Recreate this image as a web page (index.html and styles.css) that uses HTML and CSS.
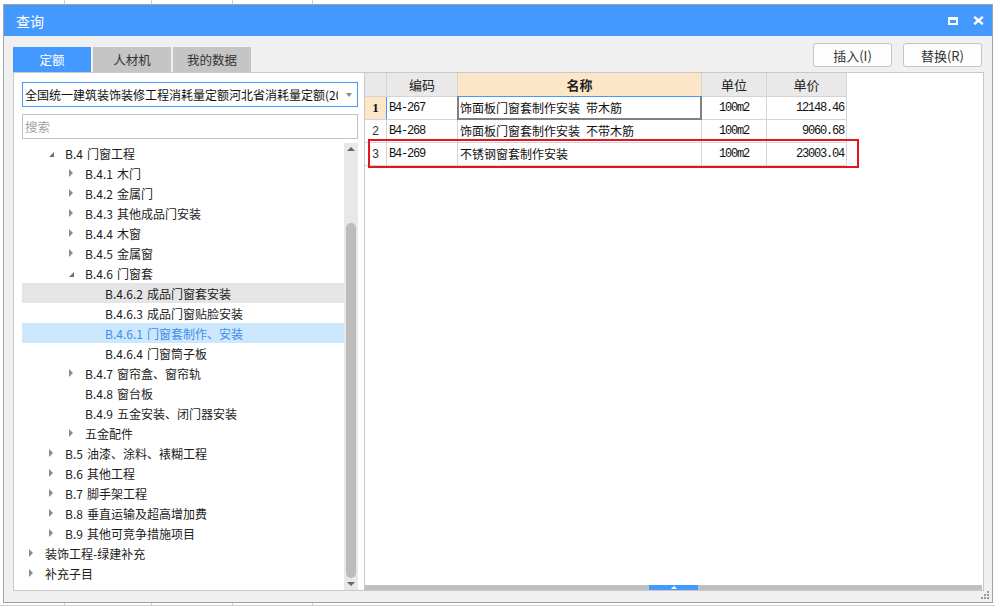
FILE: index.html
```html
<!DOCTYPE html>
<html lang="zh-CN">
<head>
<meta charset="utf-8">
<title>查询</title>
<link rel="stylesheet" href="styles.css">
</head>
<body>
<div class="dialog">
  <div class="titlebar">
    <span class="title">查询</span>
    <div class="winctl">
      <span class="max"></span>
      <svg class="close" width="11" height="9" viewBox="0 0 11 9"><path d="M1.2 0.8 L9.8 8.2 M9.8 0.8 L1.2 8.2" stroke="#fff" stroke-width="2.3" fill="none"/></svg>
    </div>
  </div>
  <div class="toolbar">
    <div class="tabs">
      <div class="tab active">定额</div>
      <div class="tab">人材机</div>
      <div class="tab">我的数据</div>
    </div>
    <div class="actions">
      <button class="btn">插入(I)</button>
      <button class="btn">替换(R)</button>
    </div>
  </div>
  <div class="main">
    <div class="left">
      <div class="select">
        <span class="select-text">全国统一建筑装饰装修工程消耗量定额河北省消耗量定额(20</span>
        <span class="caret"></span>
      </div>
      <div class="search">搜索</div>
      <div class="treewrap">
        <ul class="tree">
          <li class="row l1"><span class="tg"><i class="ad"></i></span><span class="code">B.4</span>门窗工程</li>
          <li class="row l2"><span class="tg"><i class="ar"></i></span><span class="code">B.4.1</span>木门</li>
          <li class="row l2"><span class="tg"><i class="ar"></i></span><span class="code">B.4.2</span>金属门</li>
          <li class="row l2"><span class="tg"><i class="ar"></i></span><span class="code">B.4.3</span>其他成品门安装</li>
          <li class="row l2"><span class="tg"><i class="ar"></i></span><span class="code">B.4.4</span>木窗</li>
          <li class="row l2"><span class="tg"><i class="ar"></i></span><span class="code">B.4.5</span>金属窗</li>
          <li class="row l2"><span class="tg"><i class="ad"></i></span><span class="code">B.4.6</span>门窗套</li>
          <li class="row l3 hover"><span class="tg"></span><span class="code">B.4.6.2</span>成品门窗套安装</li>
          <li class="row l3"><span class="tg"></span><span class="code">B.4.6.3</span>成品门窗贴脸安装</li>
          <li class="row l3 selected"><span class="tg"></span><span class="code">B.4.6.1</span>门窗套制作、安装</li>
          <li class="row l3"><span class="tg"></span><span class="code">B.4.6.4</span>门窗筒子板</li>
          <li class="row l2"><span class="tg"><i class="ar"></i></span><span class="code">B.4.7</span>窗帘盒、窗帘轨</li>
          <li class="row l2"><span class="tg"></span><span class="code">B.4.8</span>窗台板</li>
          <li class="row l2"><span class="tg"></span><span class="code">B.4.9</span>五金安装、闭门器安装</li>
          <li class="row l2"><span class="tg"><i class="ar"></i></span>五金配件</li>
          <li class="row l1"><span class="tg"><i class="ar"></i></span><span class="code">B.5</span>油漆、涂料、裱糊工程</li>
          <li class="row l1"><span class="tg"><i class="ar"></i></span><span class="code">B.6</span>其他工程</li>
          <li class="row l1"><span class="tg"><i class="ar"></i></span><span class="code">B.7</span>脚手架工程</li>
          <li class="row l1"><span class="tg"><i class="ar"></i></span><span class="code">B.8</span>垂直运输及超高增加费</li>
          <li class="row l1"><span class="tg"><i class="ar"></i></span><span class="code">B.9</span>其他可竞争措施项目</li>
          <li class="row l0"><span class="tg"><i class="ar"></i></span>装饰工程-绿建补充</li>
          <li class="row l0"><span class="tg"><i class="ar"></i></span>补充子目</li>
        </ul>
        <div class="vscroll">
          <span class="sb-up"></span>
          <span class="sb-thumb"></span>
          <span class="sb-down"></span>
        </div>
      </div>
    </div>
    <div class="right">
      <div class="gridarea">
        <div class="grid">
          <div class="c h"></div>
          <div class="c h">编码</div>
          <div class="c h hname">名称</div>
          <div class="c h">单位</div>
          <div class="c h">单价</div>

          <div class="c rn rn-cur">1</div>
          <div class="c mono">B4-267</div>
          <div class="c name cur">饰面板门窗套制作安装&#8194;带木筋</div>
          <div class="c mono unit">100m2</div>
          <div class="c mono price">12148.46</div>

          <div class="c rn">2</div>
          <div class="c mono">B4-268</div>
          <div class="c name">饰面板门窗套制作安装&#8194;不带木筋</div>
          <div class="c mono unit">100m2</div>
          <div class="c mono price">9060.68</div>

          <div class="c rn">3</div>
          <div class="c mono">B4-269</div>
          <div class="c name">不锈钢窗套制作安装</div>
          <div class="c mono unit">100m2</div>
          <div class="c mono price">23003.04</div>
        </div>
        <div class="redbox"></div>
      </div>
      <div class="hsplit"><span class="handle"><i class="handle-arrow"></i></span></div>
    </div>
  </div>
  <div class="footer">
    <svg class="grip" width="9" height="9" viewBox="0 0 9 9">
      <rect x="6" y="0" width="2" height="2" fill="#9a9a9a"/>
      <rect x="3" y="3" width="2" height="2" fill="#9a9a9a"/>
      <rect x="6" y="3" width="2" height="2" fill="#9a9a9a"/>
      <rect x="0" y="6" width="2" height="2" fill="#9a9a9a"/>
      <rect x="3" y="6" width="2" height="2" fill="#9a9a9a"/>
      <rect x="6" y="6" width="2" height="2" fill="#9a9a9a"/>
    </svg>
  </div>
</div>
</body>
</html>
```

FILE: styles.css
```css
html, body {
  margin: 0;
  padding: 0;
}
body {
  width: 995px;
  height: 606px;
  overflow: hidden;
  font-family: "Noto Sans CJK SC", "Microsoft YaHei", sans-serif;
  background-color: #fff;
  background-image:
    linear-gradient(#cfcfcf, #cfcfcf),
    linear-gradient(#cfcfcf, #cfcfcf),
    linear-gradient(#cfcfcf, #cfcfcf),
    linear-gradient(#cfcfcf, #cfcfcf),
    linear-gradient(#cfcfcf, #cfcfcf);
  background-size: 1px 100%, 1px 100%, 1px 100%, 1px 100%, 100% 1px;
  background-position: 64px 0, 151px 0, 232px 0, 312px 0, 0 605px;
  background-repeat: no-repeat;
}

.dialog {
  margin: 4px 2px 0 3px;
  height: 599px;
  box-sizing: border-box;
  border: 1px solid #a3a3a3;
  background: #f0f0f0;
  display: flex;
  flex-direction: column;
}

/* title bar */
.titlebar {
  flex: none;
  height: 31px;
  background: #4499fe;
  color: #fff;
  display: flex;
  align-items: center;
  padding: 0 8px 0 12px;
  font-size: 14px;
}
.title {
  flex: 1;
}
.winctl {
  display: flex;
  align-items: center;
  gap: 15px;
}
.max {
  display: block;
  width: 10px;
  height: 8px;
  box-sizing: border-box;
  border: 2px solid #fff;
  border-top-width: 3px;
}
.close {
  display: block;
}

/* toolbar */
.toolbar {
  flex: none;
  height: 36px;
  display: flex;
  justify-content: space-between;
  padding: 0 10px 0 9px;
}
.tabs {
  display: flex;
  gap: 2px;
  align-self: flex-end;
}
.tab {
  width: 78px;
  height: 25px;
  line-height: 25px;
  text-align: center;
  font-size: 12.5px;
  color: #333;
  background: #c5c5c5;
}
.tab.active {
  background: #4499fe;
  color: #fff;
}
.actions {
  display: flex;
  gap: 11px;
  padding-top: 7px;
}
.btn {
  width: 79px;
  height: 24px;
  box-sizing: border-box;
  border: 1px solid #c5c5c5;
  border-radius: 3px;
  background: #fdfdfd;
  font-family: "Noto Sans CJK SC", sans-serif;
  font-size: 13px;
  color: #333;
  padding: 0;
  line-height: 21px;
}

/* main */
.main {
  flex: none;
  height: 519px;
  margin: 0 8px 0 9px;
  box-sizing: border-box;
  border: 1px solid #c9c9c9;
  background: #fff;
  display: flex;
}
.left {
  width: 351px;
  flex: none;
  box-sizing: border-box;
  border-right: 1px solid #c9c9c9;
  padding: 9px 6px 0 8px;
  display: flex;
  flex-direction: column;
}
.select {
  flex: none;
  height: 25px;
  box-sizing: border-box;
  border: 1px solid #4499fe;
  display: flex;
  align-items: center;
}
.select-text {
  width: 313px;
  padding-left: 2px;
  overflow: hidden;
  white-space: nowrap;
  font-size: 12px;
  color: #111;
}
.caret {
  margin-left: 8px;
  width: 0;
  height: 0;
  border-top: 4px solid #8a8a8a;
  border-left: 3.5px solid transparent;
  border-right: 3.5px solid transparent;
}
.search {
  flex: none;
  margin-top: 7px;
  height: 25px;
  box-sizing: border-box;
  border: 1px solid #c3c3c3;
  padding-left: 2px;
  line-height: 23px;
  font-size: 12.5px;
  color: #a3a3a3;
}
.treewrap {
  margin-top: 4px;
  flex: 1;
  min-height: 0;
  display: flex;
}
.tree {
  flex: 1;
  list-style: none;
  margin: 0;
  padding: 0;
}
.row {
  height: 20px;
  display: flex;
  align-items: center;
  font-size: 12px;
  color: #1c1c1c;
  white-space: nowrap;
}
.row.l0 { padding-left: 0; }
.row.l1 { padding-left: 20px; }
.row.l2 { padding-left: 40px; }
.row.l3 { padding-left: 60px; }
.row.hover {
  background: #e5e5e5;
}
.row.selected {
  background: #cce8ff;
  color: #3f8ee8;
}
.code {
  margin-right: 4px;
}
.tg {
  flex: none;
  width: 23px;
  height: 20px;
  box-sizing: border-box;
  padding-left: 7px;
  display: flex;
  align-items: center;
}
.ar {
  display: block;
  width: 0;
  height: 0;
  border-left: 4px solid #8a8a8a;
  border-top: 4px solid transparent;
  border-bottom: 4px solid transparent;
}
.ad {
  display: block;
  width: 0;
  height: 0;
  margin-top: 2px;
  border-bottom: 5px solid #707070;
  border-left: 5px solid transparent;
}

.vscroll {
  flex: none;
  width: 14px;
  background: #e8e8e8;
  display: flex;
  flex-direction: column;
  align-items: center;
}
.sb-up {
  margin-top: 4px;
  width: 0;
  height: 0;
  border-bottom: 4px solid #666;
  border-left: 4px solid transparent;
  border-right: 4px solid transparent;
}
.sb-thumb {
  margin-top: 72px;
  width: 10px;
  height: 355px;
  border-radius: 5px;
  background: #bcbcbc;
}
.sb-down {
  margin-top: 4px;
  width: 0;
  height: 0;
  border-top: 4px solid #666;
  border-left: 4px solid transparent;
  border-right: 4px solid transparent;
}

/* right panel */
.right {
  flex: 1;
  display: flex;
  flex-direction: column;
}
.gridarea {
  flex: 1;
  position: relative;
}
.grid {
  display: grid;
  grid-template-columns: 22px 71px 244px 65px 80px;
  grid-template-rows: 24px 23px 23px 23px;
  width: 482px;
}
.c {
  box-sizing: border-box;
  border-right: 1px solid #d4d4d4;
  border-bottom: 1px solid #d4d4d4;
  font-size: 12px;
  color: #111;
  line-height: 22px;
  padding-left: 2px;
  white-space: nowrap;
  overflow: visible;
}
.h {
  background: #e9e9e9;
  text-align: center;
  font-size: 13px;
  line-height: 23px;
  padding-left: 0;
  color: #222;
}
.h.hname {
  background: #fde5c8;
  font-weight: bold;
}
.rn {
  text-align: center;
  padding-left: 0;
  font-family: "Liberation Sans", sans-serif;
  font-size: 12px;
  color: #333;
}
.rn-cur {
  background: #fde5c8;
  font-family: "Liberation Serif", serif;
  font-weight: bold;
  font-size: 13px;
  color: #111;
  border-right-color: #4499fe;
}
.mono {
  font-family: "Liberation Mono", monospace;
  font-size: 12px;
  letter-spacing: -1.2px;
}
.unit {
  text-align: center;
  padding-left: 0;
}
.price {
  text-align: right;
  padding-right: 2px;
}
.name {
  padding-left: 2px;
}
.cur {
  position: relative;
}
.cur::after {
  content: "";
  position: absolute;
  left: -1px;
  top: -1px;
  right: -1px;
  bottom: -1px;
  border: 2px solid #808080;
  border-top: 1px solid #4499fe;
}
.redbox {
  position: absolute;
  left: 3px;
  top: 66px;
  width: 491px;
  height: 29px;
  box-sizing: border-box;
  border: 2px solid #e3151f;
}
.hsplit {
  flex: none;
  height: 5px;
  background: #c0c0c0;
  display: flex;
  padding-left: 284px;
  margin-right: 1px;
}
.handle {
  width: 49px;
  height: 5px;
  background: #4499fe;
  display: flex;
  justify-content: center;
  align-items: flex-end;
}
.handle-arrow {
  display: block;
  width: 0;
  height: 0;
  margin-bottom: 1px;
  border-bottom: 3px solid #fff;
  border-left: 3px solid transparent;
  border-right: 3px solid transparent;
}

.footer {
  flex: 1;
  display: flex;
  justify-content: flex-end;
  align-items: flex-start;
  padding-right: 2px;
}
.grip {
  display: block;
  margin-top: 0;
}
```
